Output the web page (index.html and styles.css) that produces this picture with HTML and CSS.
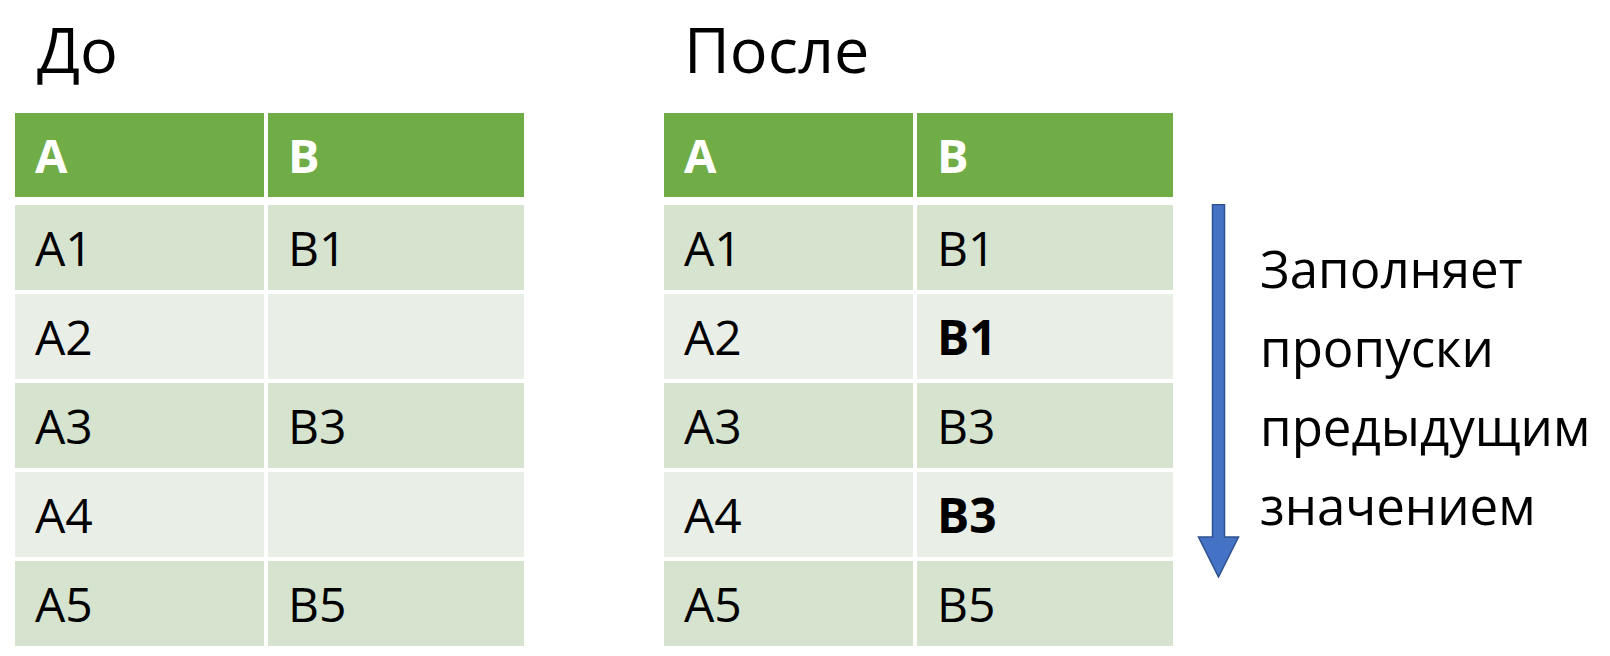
FILE: index.html
```html
<!DOCTYPE html>
<html lang="ru">
<head>
<meta charset="utf-8">
<title>До и После</title>
<link rel="stylesheet" href="styles.css">
</head>
<body>
<main class="page">
  <section class="panel">
    <h2 class="title title-before">До</h2>
    <div class="table">
      <div class="row head"><div class="cell">A</div><div class="cell">B</div></div>
      <div class="row odd"><div class="cell">A1</div><div class="cell">B1</div></div>
      <div class="row even"><div class="cell">A2</div><div class="cell"></div></div>
      <div class="row odd"><div class="cell">A3</div><div class="cell">B3</div></div>
      <div class="row even"><div class="cell">A4</div><div class="cell"></div></div>
      <div class="row odd"><div class="cell">A5</div><div class="cell">B5</div></div>
    </div>
  </section>
  <section class="panel panel-after">
    <h2 class="title">После</h2>
    <div class="table">
      <div class="row head"><div class="cell">A</div><div class="cell">B</div></div>
      <div class="row odd"><div class="cell">A1</div><div class="cell">B1</div></div>
      <div class="row even"><div class="cell">A2</div><div class="cell filled">B1</div></div>
      <div class="row odd"><div class="cell">A3</div><div class="cell">B3</div></div>
      <div class="row even"><div class="cell">A4</div><div class="cell filled">B3</div></div>
      <div class="row odd"><div class="cell">A5</div><div class="cell">B5</div></div>
    </div>
  </section>
  <aside class="note">
    <svg class="arrow" width="43" height="374" viewBox="0 0 43 374">
      <path d="M15.5 0.5 H27.5 V333 H41.5 L21.5 373 L1.5 333 H15.5 Z" fill="#4472C4" stroke="#2F528F" stroke-width="1.5" stroke-linejoin="miter"/>
    </svg>
    <p class="note-text">Заполняет<br>пропуски<br>предыдущим<br>значением</p>
  </aside>
</main>
</body>
</html>
```

FILE: styles.css
```css
html, body {
  margin: 0;
  padding: 0;
  background: #ffffff;
}

body {
  font-family: "Open Sans", "Noto Sans", sans-serif;
  color: #000000;
}

.page {
  display: flex;
  align-items: flex-start;
  padding: 17px 0 0 15px;
  width: 1610px;
  height: 656px;
  box-sizing: border-box;
}

.panel {
  display: flex;
  flex-direction: column;
  width: 509px;
}

.panel-after {
  margin-left: 140px;
}

.title {
  margin: 0 0 33px 0;
  padding-left: 20px;
  font-size: 63px;
  font-weight: 400;
  line-height: 63px;
}

.title-before {
  padding-left: 22px;
}

.table {
  display: flex;
  flex-direction: column;
  gap: 4px;
}

.row {
  display: grid;
  grid-template-columns: 249px 256px;
  column-gap: 4px;
  height: 85px;
}

.row.head {
  height: 84px;
  margin-bottom: 4px;
}

.cell {
  display: flex;
  align-items: center;
  padding-left: 20px;
  font-size: 48px;
  line-height: 1;
}

.head .cell {
  background: #70AD47;
  color: #ffffff;
  font-weight: 700;
  font-size: 47px;
}

.odd .cell {
  background: #D5E3CF;
}

.even .cell {
  background: #E9EEE7;
}

.cell.filled {
  font-weight: 700;
}

.note {
  display: flex;
  align-items: flex-start;
  margin: 187px 0 0 24px;
}

.arrow {
  display: block;
  flex: none;
}

.note-text {
  margin: 25px 0 0 20px;
  font-size: 51px;
  line-height: 79px;
  white-space: nowrap;
}
```
